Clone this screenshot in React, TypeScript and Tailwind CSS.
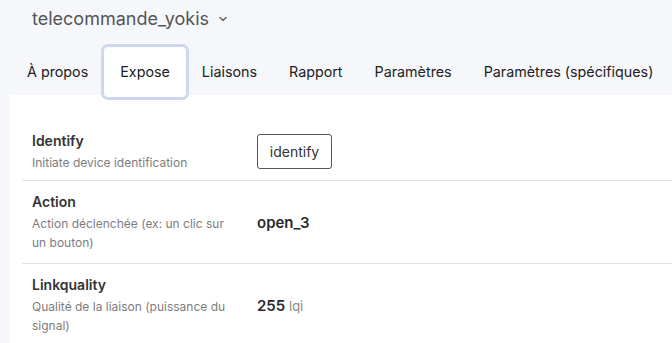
import { ChevronDown } from "lucide-react";

const TABS = ["À propos", "Expose", "Liaisons", "Rapport", "Paramètres", "Paramètres (spécifiques)"];

type Row = { title: string; desc: string; value: React.ReactNode };

const ROWS: Row[] = [
  {
    title: "Identify",
    desc: "Initiate device identification",
    value: (
      <button className="h-[35px] w-[75px] rounded-[3px] border border-[#555] bg-white text-[14px] text-[#333]">
        identify
      </button>
    ),
  },
  {
    title: "Action",
    desc: "Action déclenchée (ex: un clic sur un bouton)",
    value: <span className="text-[15px] font-semibold text-[#2a2a2a]">open_3</span>,
  },
  {
    title: "Linkquality",
    desc: "Qualité de la liaison (puissance du signal)",
    value: (
      <span className="text-[15px] font-semibold text-[#2a2a2a]">
        255 <span className="text-[13px] font-normal text-[#888]">lqi</span>
      </span>
    ),
  },
];

export default function App() {
  return (
    <div className="h-[343px] w-[672px] overflow-hidden bg-[#f6f7fa] font-['Inter',sans-serif]">
      {/* Header */}
      <div className="flex h-[35px] items-center gap-2 pl-8 pt-[1px]">
        <span className="text-[18px] text-[#555]">telecommande_yokis</span>
        <ChevronDown className="mt-[2px] h-3 w-3 text-[#666]" strokeWidth={3} />
      </div>

      {/* Tabs */}
      <div className="flex pl-[11px] pt-3">
        {TABS.map((t) => (
          <div
            key={t}
            className={`flex h-[50px] items-center whitespace-nowrap px-4 text-[14.3px] text-[#222] ${
              t === "Expose" ? "relative z-10 rounded-[4px] bg-white ring-[3px] ring-[#cdd8ef]" : ""
            }`}
          >
            {t}
          </div>
        ))}
      </div>

      {/* Panel */}
      <div className="-mt-[2px] ml-[10px] bg-white pl-3 pt-[25px]">
        {ROWS.map((r, i) => (
          <div
            key={r.title}
            className={`flex items-center pl-[10px] ${
              i === 0 ? "pt-[11px] pb-[8px]" : "py-[11px]"
            } ${i < ROWS.length - 1 ? "border-b border-[#e2e2e2]" : ""}`}
          >
            <div className="w-[212px] shrink-0 pr-2">
              <div className="text-[14px] font-semibold leading-5 text-[#333]">{r.title}</div>
              <div className="mt-[2px] text-[12px] leading-[19px] text-[#7d7d7d]">{r.desc}</div>
            </div>
            <div className="ml-[13px]">{r.value}</div>
          </div>
        ))}
      </div>
    </div>
  );
}
